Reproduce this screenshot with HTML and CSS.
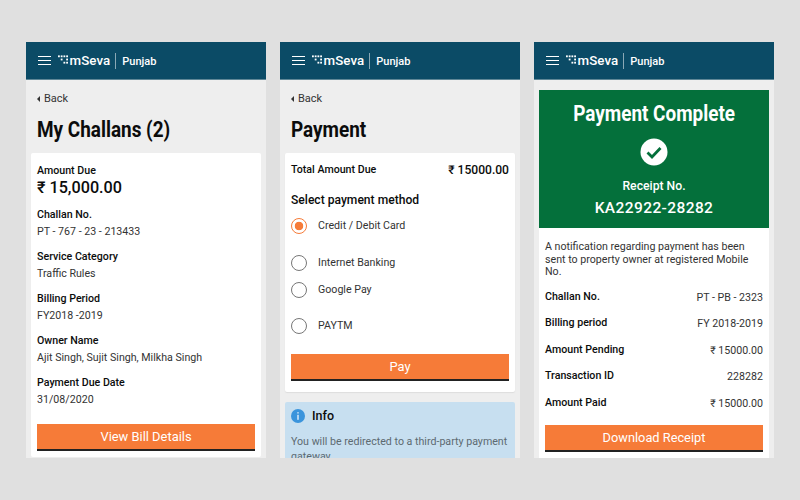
FILE: index.html
```html
<!DOCTYPE html>
<html>
<head>
	<meta charset="UTF-8" />
	<title>mSeva Punjab</title>
	<link rel="stylesheet" href="styles.css">
</head>
<body>
	<svg class="defs" width="0" height="0">
		<symbol id="logo-dots" viewBox="0 0 11 9">
			<rect x="0" y="0" width="2" height="2" />
			<rect x="3" y="0" width="2" height="2" />
			<rect x="6" y="0" width="2" height="2" />
			<rect x="9" y="0" width="2" height="2" />
			<rect x="3" y="3.5" width="2" height="2" />
			<rect x="9" y="3.5" width="2" height="2" />
			<rect x="6" y="7" width="2" height="2" />
			<rect x="9" y="7" width="2" height="2" />
		</symbol>
	</svg>

	<div class="screen">
		<div class="topbar">
			<div class="burger"><i></i><i></i><i></i></div>
			<svg class="dots" width="10" height="9"><use href="#logo-dots" /></svg>
			<span class="brand">mSeva</span>
			<span class="brand-line"></span>
			<span class="city">Punjab</span>
		</div>
		<div class="back"><span class="arrow"></span>Back</div>
		<h1 class="title"><span>My Challans (2)</span></h1>
		<div class="card">
			<div class="label">Amount Due</div>
			<div class="amount">₹ 15,000.00</div>
			<div class="label">Challan No.</div>
			<div class="value">PT - 767 - 23 - 213433</div>
			<div class="label">Service Category</div>
			<div class="value">Traffic Rules</div>
			<div class="label">Billing Period</div>
			<div class="value">FY2018 -2019</div>
			<div class="label">Owner Name</div>
			<div class="value">Ajit Singh, Sujit Singh, Milkha Singh</div>
			<div class="label">Payment Due Date</div>
			<div class="value">31/08/2020</div>
			<div class="btn bill-btn">View Bill Details</div>
		</div>
	</div>

	<div class="screen">
		<div class="topbar">
			<div class="burger"><i></i><i></i><i></i></div>
			<svg class="dots" width="10" height="9"><use href="#logo-dots" /></svg>
			<span class="brand">mSeva</span>
			<span class="brand-line"></span>
			<span class="city">Punjab</span>
		</div>
		<div class="back"><span class="arrow"></span>Back</div>
		<h1 class="title"><span>Payment</span></h1>
		<div class="card pay-card">
			<div class="total">
				<span class="label">Total Amount Due</span>
				<span class="total-num">₹ 15000.00</span>
			</div>
			<div class="select-title">Select payment method</div>
			<div class="radio first checked"><span class="circle"></span>Credit / Debit Card</div>
			<div class="radio internet"><span class="circle"></span>Internet Banking</div>
			<div class="radio google"><span class="circle"></span>Google Pay</div>
			<div class="radio paytm"><span class="circle"></span>PAYTM</div>
			<div class="btn pay-btn">Pay</div>
		</div>
		<div class="info">
			<div class="info-head">
				<svg width="14" height="14" viewBox="0 0 14 14">
					<circle cx="7" cy="7" r="7" fill="#3a94dc" />
					<rect x="6.4" y="3.2" width="1.2" height="1.3" fill="#fff" />
					<rect x="6.4" y="5.8" width="1.2" height="5" fill="#fff" />
				</svg>
				Info
			</div>
			<div class="info-text">You will be redirected to a third-party payment gateway</div>
		</div>
	</div>

	<div class="screen">
		<div class="topbar">
			<div class="burger"><i></i><i></i><i></i></div>
			<svg class="dots" width="10" height="9"><use href="#logo-dots" /></svg>
			<span class="brand">mSeva</span>
			<span class="brand-line"></span>
			<span class="city">Punjab</span>
		</div>
		<div class="done-wrap">
			<div class="done">
				<div class="done-title"><span>Payment Complete</span></div>
				<svg class="tick" width="28" height="28" viewBox="0 0 28 28">
					<circle cx="14" cy="14" r="13.5" fill="#fff" />
					<path d="M7.5 14.5 L12 19 L20.5 10" fill="none" stroke="#04703b" stroke-width="2.8" />
				</svg>
				<div class="receipt">Receipt No.</div>
				<div class="receipt-num">KA22922-28282</div>
			</div>
			<div class="done-body">
				<p class="note">A notification regarding payment has been sent to property owner at registered Mobile No.</p>
				<div class="row"><span class="label">Challan No.</span><span class="row-val">PT - PB - 2323</span></div>
				<div class="row"><span class="label">Billing period</span><span class="row-val">FY 2018-2019</span></div>
				<div class="row"><span class="label">Amount Pending</span><span class="row-val">₹ 15000.00</span></div>
				<div class="row"><span class="label">Transaction ID</span><span class="row-val">228282</span></div>
				<div class="row"><span class="label">Amount Paid</span><span class="row-val">₹ 15000.00</span></div>
				<div class="btn receipt-btn">Download Receipt</div>
			</div>
		</div>
	</div>
</body>
</html>
```

FILE: styles.css
```css
body {
	margin: 0;
	width: 800px;
	height: 500px;
	overflow: hidden;
	background-color: #e0e0e0;
	font-family: Roboto, "Liberation Sans", sans-serif;
	color: #0b0c0c;
	display: flex;
	gap: 14px;
	padding: 42px 26px 0;
	box-sizing: border-box;
}
.defs {
	display: none;
}
.screen {
	width: 240px;
	height: 416px;
	overflow: hidden;
	background-color: #eeeeee;
	flex-shrink: 0;
}
.topbar {
	height: 38px;
	box-sizing: border-box;
	background-color: #0b4b66;
	border-bottom: 1px solid #5f8797;
	display: flex;
	align-items: center;
	padding-left: 12px;
	color: #fff;
}
.burger {
	width: 13px;
	margin-right: 7px;
}
.burger i {
	display: block;
	height: 1.5px;
	background-color: #fff;
	margin: 2.5px 0;
}
.dots {
	fill: #fff;
	margin-right: 1.5px;
	margin-top: -2px;
}
.brand {
	font-size: 13.3px;
	font-weight: 500;
	letter-spacing: 0.1px;
}
.brand-line {
	width: 1px;
	height: 16px;
	background-color: #8aa8b5;
	margin: 0 6px 0 5px;
}
.city {
	font-size: 11px;
	font-weight: 500;
	margin-top: 2px;
}
.back {
	font-size: 11px;
	line-height: 13px;
	color: #333;
	margin: 12px 0 0 11px;
	display: flex;
	align-items: center;
}
.arrow {
	width: 0;
	height: 0;
	border-style: solid;
	border-width: 3px 3px 3px 0;
	border-color: transparent #333 transparent transparent;
	margin-right: 4px;
}
.title {
	font-size: 22px;
	line-height: 26px;
	font-weight: 700;
	margin: 12px 0 10px 11px;
	white-space: nowrap;
}
.title span, .done-title span {
	display: inline-block;
	transform: scaleX(0.86);
	transform-origin: left;
}
.card {
	background-color: #fff;
	margin: 0 5px;
	padding: 11px 6px 6px;
	border-radius: 2px;
}
.label {
	font-size: 10.65px;
	line-height: 13px;
	font-weight: 500;
	color: #0b0c0c;
}
.value {
	font-size: 10.65px;
	line-height: 13px;
	color: #333;
	margin: 4px 0 12px;
}
.amount {
	font-size: 16.2px;
	line-height: 20px;
	font-weight: 500;
	margin: 1px 0 10px;
}
.btn {
	background-color: #f67b38;
	border-bottom: 2px solid #222;
	color: #fff;
	font-size: 12.9px;
	line-height: 25px;
	text-align: center;
}
.bill-btn {
	margin-top: 18px;
}
.pay-card {
	padding-top: 10px;
	padding-bottom: 11px;
	box-shadow: 0 1px 1px #dddddd;
}
.total {
	display: flex;
	justify-content: space-between;
	align-items: center;
}
.total .label {
	margin-top: -1px;
}
.total-num {
	font-size: 12.1px;
	font-weight: 500;
}
.select-title {
	font-size: 12.1px;
	line-height: 15px;
	font-weight: 500;
	margin-top: 16px;
}
.radio {
	display: flex;
	align-items: center;
	font-size: 10.65px;
	line-height: 16px;
	color: #333;
	margin-top: 11px;
}
.radio.first {
	margin-top: 10px;
}
.radio.internet {
	margin-top: 21px;
}
.radio.google {
	margin-top: 10.5px;
}
.radio.paytm {
	margin-top: 20.5px;
}
.circle {
	width: 16px;
	height: 16px;
	box-sizing: border-box;
	border: 1px solid #777;
	border-radius: 50%;
	margin-right: 11px;
}
.checked .circle {
	border-color: #f67b38;
	background: radial-gradient(circle, #f67b38 0 4px, #fff 4.6px);
}
.pay-btn {
	margin-top: 20px;
}
.info {
	background-color: #c7dff0;
	margin: 10px 5px 0;
	padding: 6px;
	border-radius: 2px;
}
.info-head {
	display: flex;
	align-items: center;
	gap: 7px;
	font-size: 12.5px;
	line-height: 15px;
	font-weight: 500;
}
.info-text {
	font-size: 10.65px;
	line-height: 15px;
	color: #5d6a70;
	margin-top: 11px;
}
.done-wrap {
	margin: 10px 5px 0;
	background-color: #fff;
}
.done {
	background-color: #04703b;
	color: #fff;
	text-align: center;
	height: 138px;
	padding-top: 11px;
	box-sizing: border-box;
}
.done-title {
	font-size: 22px;
	line-height: 26px;
	font-weight: 700;
	white-space: nowrap;
}
.done-title span {
	transform-origin: center;
}
.tick {
	display: block;
	margin: 11px auto 0;
}
.receipt {
	font-size: 12.2px;
	line-height: 14px;
	font-weight: 500;
	margin-top: 13px;
}
.receipt-num {
	font-size: 15.5px;
	line-height: 18px;
	font-weight: 500;
	letter-spacing: 0.4px;
	margin-top: 6px;
}
.done-body {
	padding: 13px 6px 20px;
}
.note {
	font-size: 10.65px;
	line-height: 12.5px;
	color: #333;
	margin: 0 0 11px;
}
.row {
	display: flex;
	justify-content: space-between;
	height: 26.6px;
}
.row-val {
	font-size: 10.65px;
	line-height: 15px;
	color: #333;
}
.receipt-btn {
	margin-top: 3px;
	font-size: 12.8px;
}
```
